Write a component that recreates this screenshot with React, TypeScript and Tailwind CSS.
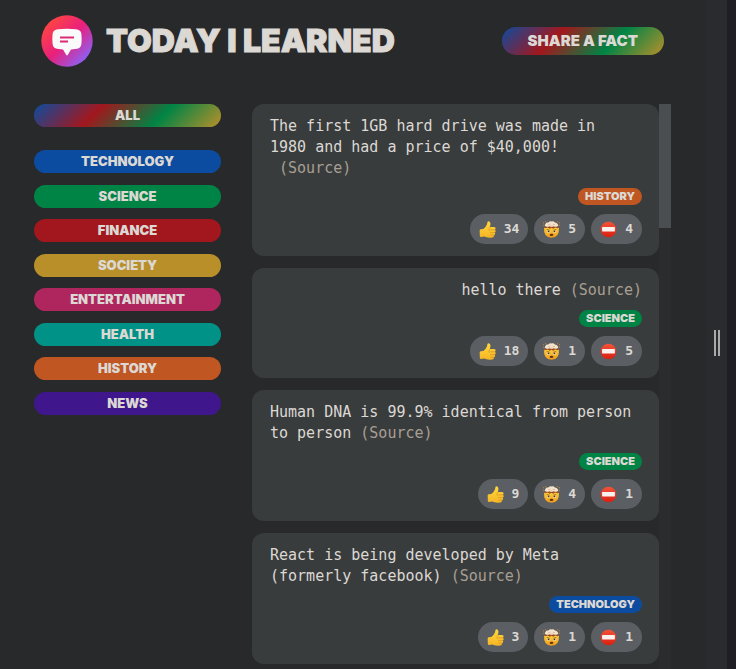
import React from "react";

type Fact = {
  lines: string[];
  category: string;
  votes: [number, number, number];
};

const CATEGORIES = [
  { name: "technology", color: "bg-[#0c4ca0]" },
  { name: "science", color: "bg-[#008445]" },
  { name: "finance", color: "bg-[#a2171d]" },
  { name: "society", color: "bg-[#b98f2a]" },
  { name: "entertainment", color: "bg-[#af265f]" },
  { name: "health", color: "bg-[#009286]" },
  { name: "history", color: "bg-[#c05621]" },
  { name: "news", color: "bg-[#40168c]" },
];

const FACTS: Fact[] = [
  {
    lines: [
      "The first 1GB hard drive was made in",
      "1980 and had a price of $40,000!",
      "\u00a0",
    ],
    category: "history",
    votes: [34, 5, 4],
  },
  { lines: ["hello there "], category: "science", votes: [18, 1, 5] },
  {
    lines: ["Human DNA is 99.9% identical from person", "to person "],
    category: "science",
    votes: [9, 4, 1],
  },
  {
    lines: ["React is being developed by Meta", "(formerly facebook) "],
    category: "technology",
    votes: [3, 1, 1],
  },
];

const RAINBOW =
  "bg-[linear-gradient(135deg,#0c4ca0,#a2171d,#008445,#b98f2a)]";
const DISPLAY =
  "font-['Inter','Lato',sans-serif] font-black uppercase text-[#dcd8d4]";

function Logo() {
  return (
    <svg viewBox="0 0 52 52" className="size-[52px] shrink-0" aria-hidden="true">
      <defs>
        <linearGradient id="logo" x1="0.12" y1="0.12" x2="0.88" y2="0.88">
          <stop offset="0" stopColor="#ff4640" />
          <stop offset="0.5" stopColor="#e8207c" />
          <stop offset="1" stopColor="#8a62f8" />
        </linearGradient>
      </defs>
      <circle cx="26" cy="26" r="25.7" fill="url(#logo)" />
      <path
        d="M17 14.3Q26 13.3 35 14.3Q40 14.8 40.4 19Q41 24 40.4 29Q40 33 36 33.7L30 34.4L27 39.6Q26 41.4 25 39.6L22 34.4L16 33.7Q12 33 11.6 29Q11 24 11.6 19Q12 14.8 17 14.3Z"
        fill="#fafafa"
      />
      <path
        d="M19 22.4H33M19 26.5H27"
        stroke="#dc2a72"
        strokeWidth="2"
      />
    </svg>
  );
}

function ThumbsUp() {
  return (
    <svg viewBox="0 0 18 18" className="size-[17px]" aria-hidden="true">
      <defs>
        <linearGradient id="thumb" x1="0" y1="0" x2="0" y2="1">
          <stop offset="0" stopColor="#ffd83c" />
          <stop offset="1" stopColor="#f5b526" />
        </linearGradient>
      </defs>
      <path
        d="M.7 10.4Q.5 9 1.8 8.8L4.6 8.4Q7.4 6.2 8.5 3.4L8.9 1.2Q9.4 0 10.7.5Q12.7 1.4 11.9 4.7L11.5 6.3H16Q17.7 6.5 17.6 8Q17.5 8.9 16.8 9.2Q17.8 9.8 17.6 11Q17.4 12 16.6 12.3Q17.3 13 17 14Q16.7 14.9 15.8 15Q16 17.3 14 17.5Q10 17.9 7.2 17L5.6 16.5L2 16.9Q1 16.9.9 15.8Z"
        fill="url(#thumb)"
      />
      <path
        d="M16.8 9.3H12.4M16.5 12.3H12.3M15.7 15H12.4M11.5 6.5Q9.9 8 10.7 9.9"
        fill="none"
        stroke="#cf8419"
        strokeWidth=".6"
        strokeLinecap="round"
      />
    </svg>
  );
}

function MindBlown() {
  return (
    <svg viewBox="0 0 18 18" className="size-[17px]" aria-hidden="true">
      <defs>
        <linearGradient id="face" x1="0" y1="0" x2="0" y2="1">
          <stop offset="0" stopColor="#ffd33d" />
          <stop offset="1" stopColor="#ee9a1d" />
        </linearGradient>
      </defs>
      <path
        d="M1.2 7Q5 6 9 6.2Q13 6 16.8 7Q17.8 17.4 9 17.8Q.2 17.4 1.2 7Z"
        fill="url(#face)"
      />
      <path
        d="M1 6.8L3.4 5.2H14.6L17 6.8L15.4 7.8L13 7L10.8 8.2L9 7.2L7.2 8.2L5 7L2.6 7.8Z"
        fill="#9c4a20"
      />
      <path
        d="M3 5.8Q.9 4.8 2.6 3.1Q3.2 1.3 5.6 1.6Q7.4-.1 9.2.5Q11.4-.1 12.6 1.5Q15 1.5 15.4 3.1Q17.1 4.8 15 5.8Q13 6.6 11.4 5.6Q9 6.9 6.7 5.6Q5 6.6 3 5.8Z"
        fill="#f3e3cd"
      />
      <path
        d="M5.5 3.5Q6.6 4.6 7.8 3.4M10.3 3.3Q11.5 4.6 12.7 3.5M8 5.3H10"
        fill="none"
        stroke="#c9997a"
        strokeWidth=".6"
      />
      <path
        d="M0 1.9H1.2M.1 4.6H1.1M16.8 1.8H18M16.9 4.4H17.9M2.2.7H3.2M14.9.7H15.9"
        stroke="#d78b28"
        strokeWidth=".9"
      />
      <circle cx="5.8" cy="11" r="1.6" fill="#fff0c4" />
      <circle cx="12.2" cy="11" r="1.6" fill="#fff0c4" />
      <circle cx="5.9" cy="11" r="1" fill="#59300e" />
      <circle cx="12.1" cy="11" r="1" fill="#59300e" />
      <path
        d="M4 9.1L7 9.8M14 9.1L11 9.8"
        stroke="#70400f"
        strokeWidth=".7"
      />
      <ellipse cx="9" cy="14.7" rx="2" ry="1.1" fill="#67330e" />
    </svg>
  );
}

function NoEntry() {
  return (
    <svg viewBox="0 0 18 18" className="size-[17px]" aria-hidden="true">
      <defs>
        <linearGradient id="stop" x1="0" y1="0" x2="0" y2="1">
          <stop offset="0" stopColor="#f4523a" />
          <stop offset="1" stopColor="#d91f0f" />
        </linearGradient>
      </defs>
      <circle cx="9" cy="9" r="8.3" fill="url(#stop)" />
      <rect x="2.2" y="6.4" width="13.6" height="4.6" rx=".6" fill="#f7f1f0" />
    </svg>
  );
}

const REACTIONS = [
  { label: "Interesting", Icon: ThumbsUp },
  { label: "Mind blowing", Icon: MindBlown },
  { label: "False", Icon: NoEntry },
];

function FactCard({ fact }: { fact: Fact }) {
  const color = CATEGORIES.find((c) => c.name === fact.category)?.color;
  const lead = fact.lines.slice(0, -1);
  const last = fact.lines[fact.lines.length - 1];
  return (
    <li className="flex flex-col items-end gap-[9px] rounded-xl bg-[#393c3c] py-3 pl-[18px] pr-[17px]">
      <p
        className={`whitespace-pre-wrap text-[15px] leading-[21px] ${lead.length ? "w-full" : ""}`}
      >
        {lead.map((line) => (
          <span key={line} className="block">
            {line}
          </span>
        ))}
        <span className="block">
          {last}
          <a href="#source" className="text-[#a89f94]">
            (Source)
          </a>
        </span>
      </p>
      <span
        className={`${DISPLAY} ${color} h-[17px] rounded-full px-[7px] text-[11px] leading-[17px]`}
      >
        {fact.category}
      </span>
      <div className="flex gap-[6px]">
        {REACTIONS.map(({ label, Icon }, i) => (
          <button
            key={label}
            type="button"
            aria-label={`${label} ${fact.votes[i]}`}
            className="flex h-[30px] items-center gap-2 rounded-full bg-[#5b5f63] px-[9px] text-[13px] font-bold"
          >
            <Icon />
            <span>{fact.votes[i]}</span>
          </button>
        ))}
      </div>
    </li>
  );
}

export default function App() {
  return (
    <div className="flex h-screen overflow-hidden bg-[#28292b] font-['DejaVu_Sans_Mono','Liberation_Mono',monospace] text-[#dcd8d4]">
      <div className="flex min-w-0 flex-1 flex-col pl-[34px] pr-9">
        <header className="flex items-center justify-between px-[7px] pt-[15px]">
          <div className="flex items-center gap-[13px]">
            <Logo />
            <h1
              className={`${DISPLAY} whitespace-nowrap text-[32px] leading-[52px] [-webkit-text-stroke:1px_#dcd8d4]`}
            >
              Today I Learned
            </h1>
          </div>
          <button
            type="button"
            className={`${DISPLAY} ${RAINBOW} h-7 whitespace-nowrap rounded-full px-[26px] text-[15px]`}
          >
            Share a fact
          </button>
        </header>

        <main className="mt-[37px] flex min-h-0 flex-1 gap-[31px]">
          <aside className="w-[187px] shrink-0">
            <button
              type="button"
              className={`${DISPLAY} ${RAINBOW} block h-[23px] w-full rounded-full text-[13px] leading-[23px]`}
            >
              All
            </button>
            <ul className="mt-[23px] flex h-[265px] flex-col justify-between">
              {CATEGORIES.map((c) => (
                <li key={c.name}>
                  <button
                    type="button"
                    className={`${DISPLAY} ${c.color} block h-[23px] w-full rounded-full text-[13px] leading-[23px]`}
                  >
                    {c.name}
                  </button>
                </li>
              ))}
            </ul>
          </aside>

          <section className="flex min-w-0 flex-1 overflow-hidden">
            <ul className="flex min-w-0 flex-1 flex-col gap-3">
              {FACTS.map((fact) => (
                <FactCard key={fact.lines[0]} fact={fact} />
              ))}
            </ul>
            <div className="w-3 bg-[#2b2c2e]">
              <div className="h-[124px] bg-[#4b4e50]" />
            </div>
          </section>
        </main>
      </div>

      <div className="flex w-5 shrink-0 items-center justify-center gap-[2px] bg-[#2a2b2e] pt-4">
        <div className="h-[26px] w-[2px] bg-[#a9a9aa]" />
        <div className="h-[26px] w-[2px] bg-[#a9a9aa]" />
      </div>
      <div className="w-[9px] shrink-0 bg-[#1f1e24]" />
    </div>
  );
}
